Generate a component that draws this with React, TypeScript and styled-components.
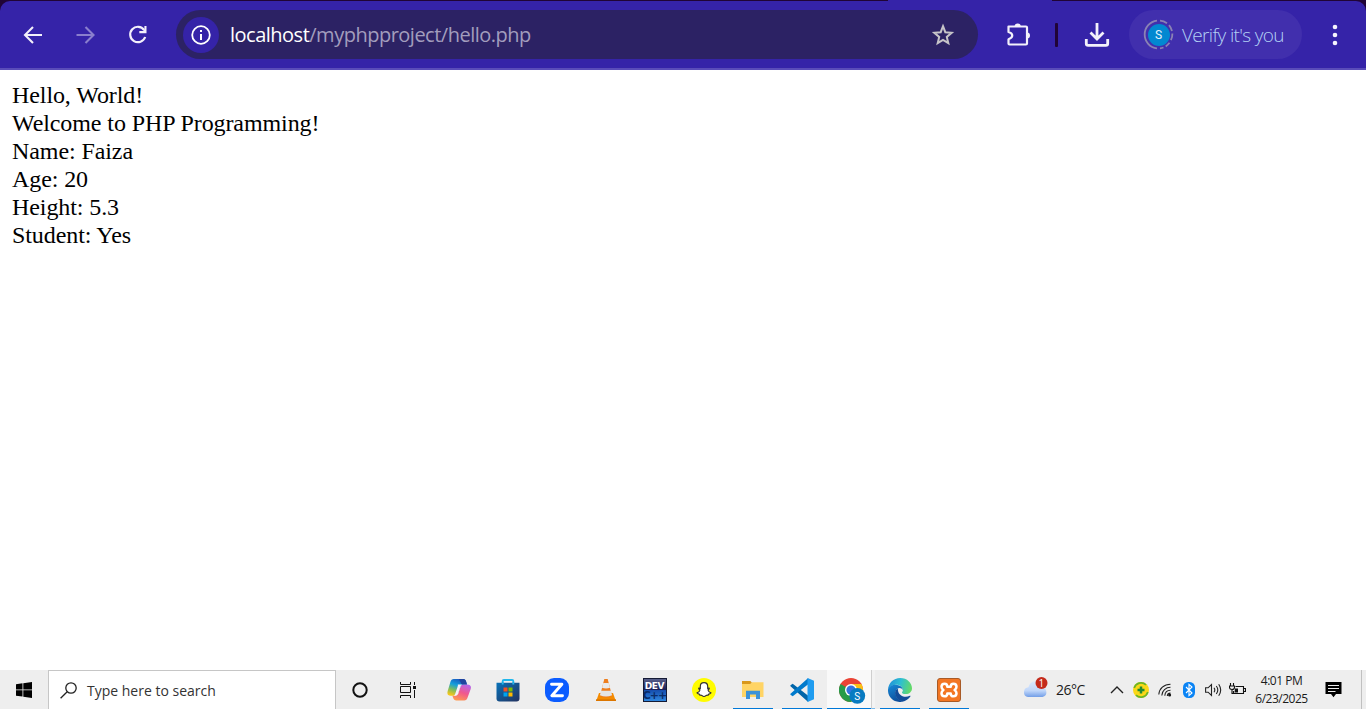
import React from "react";
import styled, { createGlobalStyle } from "styled-components";

const GlobalStyle = createGlobalStyle`
  *, *::before, *::after { box-sizing: border-box; }
  html, body { margin: 0; padding: 0; overflow: hidden; background: #fff; }
  svg { display: block; flex: none; }
`;

const uiFont = `"Open Sans", "Noto Sans", sans-serif`;

const Screen = styled.div`
  display: flex;
  flex-direction: column;
  width: 1366px;
  height: 709px;
  overflow: hidden;
  font-family: ${uiFont};
`;

/* ---------- browser ---------- */

const Frame = styled.header`
  flex: none;
  height: 70px;
  background: #200436;
`;

const TabEdge = styled.div`
  width: 164px;
  height: 1px;
  margin-left: 888px;
  background: #3523a8;
`;

const Toolbar = styled.div`
  display: flex;
  align-items: center;
  height: 69px;
  padding: 0 7px;
  background: #3523a8;
  border-bottom: 2px solid #5a4cb9;
  border-radius: 10px 10px 0 0;
`;

const ToolButton = styled.button<{ $width: number }>`
  display: flex;
  align-items: center;
  justify-content: center;
  flex: none;
  width: ${(p) => p.$width}px;
  height: 48px;
  padding: 0;
  border: 0;
  background: none;
`;

const Omnibox = styled.div`
  display: flex;
  align-items: center;
  flex: none;
  width: 802px;
  height: 49px;
  margin: 0 14px 0 12px;
  padding: 0 23px 0 7px;
  background: #2c2264;
  border-radius: 25px;
`;

const SiteInfo = styled.span`
  display: flex;
  align-items: center;
  justify-content: center;
  width: 36px;
  height: 36px;
  margin-right: 11px;
  border-radius: 50%;
  background: #3523a8;
`;

const Address = styled.span`
  flex: 1;
  color: #a29dbd;
  font-size: 20px;
  line-height: 28px;
  letter-spacing: -0.5px;
  white-space: nowrap;
`;

const Host = styled.span`
  color: #fff;
`;

const Divider = styled.span`
  flex: none;
  width: 3px;
  height: 24px;
  margin: 0 14px 0 12px;
  border-radius: 1px;
  background: #200436;
`;

const ProfileChip = styled.button`
  display: flex;
  align-items: center;
  flex: none;
  width: 173px;
  height: 49px;
  margin: 0 7px 0 8px;
  padding: 0 0 0 14px;
  border: 0;
  border-radius: 25px;
  background: #412fad;
  color: #b3d1f5;
  font-family: ${uiFont};
  font-weight: 300;
  font-size: 19px;
  letter-spacing: -0.65px;
  white-space: nowrap;
`;

const Avatar = styled.span`
  display: grid;
  place-items: center;
  width: 31px;
  height: 31px;
  margin-right: 8px;
  & > * { grid-area: 1 / 1; }
`;

const AvatarFace = styled.span`
  width: 22px;
  height: 22px;
  border-radius: 50%;
  background: #0288d1;
  color: #e4f3fc;
  font: 400 12px/22px Roboto, sans-serif;
  letter-spacing: 0;
  text-align: center;
`;

const Page = styled.main`
  flex: 1;
  padding: 11px 12px;
  background: #fff;
  color: #000;
  font-family: "Liberation Serif", serif;
  font-size: 24px;
  line-height: 28px;
  letter-spacing: -0.09px;
`;

const Line = styled.div`
  white-space: nowrap;
`;

/* ---------- taskbar ---------- */

const Taskbar = styled.footer`
  display: flex;
  flex: none;
  height: 39px;
  background: #eee;
  color: #1b1b1b;
`;

const Slot = styled.div<{ $width: number; $end?: number }>`
  display: flex;
  justify-content: center;
  align-items: center;
  flex: none;
  width: ${(p) => p.$width}px;
  height: 39px;
  padding-right: ${(p) => p.$end ?? 0}px;
`;

const Search = styled.div`
  display: flex;
  align-items: center;
  flex: none;
  width: 288px;
  height: 39px;
  padding: 0 0 0 11px;
  gap: 10px;
  border: 1px solid #c6c6c6;
  border-bottom: 0;
  background: #fff;
  color: #333;
  font-size: 14px;
  letter-spacing: 0;
`;

const Apps = styled.div`
  display: flex;
  flex: none;
  margin-left: 7px;
  gap: 9px;
`;

const AppButton = styled.div<{ $open?: boolean }>`
  display: flex;
  justify-content: center;
  flex: none;
  width: 40px;
  height: 39px;
  padding-top: 8px;
  padding-right: 1px;
  border-bottom: ${(p) => (p.$open ? "1px solid #0078d7" : "0")};
`;

const ActiveApp = styled.div`
  display: flex;
  flex: none;
  height: 39px;
  margin: 0 -4px;
`;

const ActiveFace = styled.div`
  width: 44px;
  height: 39px;
  padding: 8px 0 0 12px;
  background: #f9f9f9;
  border-bottom: 1px solid #0078d7;
`;

const StackEdge = styled.div`
  width: 4px;
  height: 39px;
  background: #f3f3f3;
  border-left: 1px solid #cfcfcf;
  border-bottom: 1px solid #76b9ed;
`;

const Tray = styled.div`
  display: flex;
  align-items: center;
  margin-left: auto;
`;

const WeatherBox = styled.div`
  padding-bottom: 4px;
`;

const Temperature = styled.span`
  width: 49px;
  margin-left: 7px;
  font-size: 14px;
  letter-spacing: -0.5px;
  white-space: nowrap;
`;

const Clock = styled.div`
  width: 65px;
  color: #1b1b1b;
  font-size: 12px;
  line-height: 18px;
  letter-spacing: -0.5px;
  text-align: center;
  white-space: nowrap;
`;

const ShowDesktop = styled.div`
  width: 5px;
  height: 39px;
  border-left: 1px solid #c0c0c0;
`;

/* ---------- toolbar icons ---------- */

const Back = ({ dim }: { dim?: boolean }) => (
  <svg width="20" height="20" viewBox="0 0 20 20" fill="none" stroke={dim ? "#8a7fcd" : "#f3f0fb"} strokeWidth="2.1">
    {dim ? <path d="M.5 10H17.5M9.5 2l8 8-8 8" /> : <path d="M19 10H2M10 2l-8 8 8 8" />}
  </svg>
);

const Reload = () => (
  <svg width="20" height="20" viewBox="0 0 20 20">
    <path d="M16.2 5A7.7 7.7 0 1 0 17.2 12" fill="none" stroke="#f3f0fb" strokeWidth="2.2" />
    <path d="M18.5 1v7.2h-7.2V6.1h3.9L16.4 4.6V1z" fill="#f3f0fb" />
  </svg>
);

const Info = () => (
  <svg width="20" height="20" viewBox="0 0 20 20">
    <circle cx="10" cy="10" r="8.8" fill="none" stroke="#fff" strokeWidth="1.8" />
    <path d="M9 5h2v2H9zM9 9h2v6H9z" fill="#fff" />
  </svg>
);

const Star = () => (
  <svg width="24" height="24" viewBox="0 0 24 24">
    <path
      d="M12 3.2l2.3 6 6.4.5-4.9 4.2 1.5 6.3-5.3-3.3-5.3 3.3 1.5-6.3-4.9-4.2 6.4-.5z"
      fill="none" stroke="#c6c4c8" strokeWidth="2"
    />
  </svg>
);

const Puzzle = () => (
  <svg width="26" height="26" viewBox="0 0 26 26">
    <path
      d="M3.5 4.5h17.5q1 0 1 1v16q0 1-1 1h-16.500q-1 0-1-1v-4.300c5-1.700 5-5.700 0-7.200z"
      fill="none" stroke="#f3f0fb" strokeWidth="2.2" strokeLinejoin="round"
    />
    <path d="M9.600 4.500a3.100 3.100 0 0 1 6.200 0zM22 10.500a3 3 0 0 1 0 6z" fill="#f3f0fb" />
  </svg>
);

const Download = () => (
  <svg width="26" height="26" viewBox="0 0 26 26" fill="none" stroke="#f3f0fb" strokeWidth="2.8">
    <path d="M13 1v15.500M6.500 10.500L13 17l6.500-6.500M2.300 17v4.500q0 1.800 1.800 1.800h17.800q1.800 0 1.800-1.800V17" />
  </svg>
);

const Dots = () => (
  <svg width="6" height="22" viewBox="0 0 6 22" fill="#f6f4fc">
    <circle cx="3" cy="3" r="2.3" />
    <circle cx="3" cy="11" r="2.3" />
    <circle cx="3" cy="19" r="2.3" />
  </svg>
);

const AvatarRing = () => (
  <svg width="31" height="31" viewBox="0 0 31 31" fill="none" stroke="#8a82b4" strokeWidth="1.8">
    <path d="M14 1.6A14 14 0 0 0 14 29.4" />
    <path d="M17 1.6a14 14 0 0 1 7 2.6M26 6.2a14 14 0 0 1 3 5.8M29.4 14.5a14 14 0 0 1-1.500 6.700M26.500 23.800a14 14 0 0 1-3.800 3.600M20.500 28.500a14 14 0 0 1-3.500.9" />
  </svg>
);

/* ---------- taskbar icons ---------- */

const Windows = () => (
  <svg width="16" height="16" viewBox="0 0 16 16">
    <path d="M0 2.2L6.500 1.300V7.500H0zM7.300 1.200L16 0V7.500H7.300zM0 8.300H6.500V14.600L0 13.700zM7.300 8.300H16V16L7.300 14.800z" />
  </svg>
);

const Magnifier = () => (
  <svg width="17" height="17" viewBox="0 0 17 17" fill="none" stroke="#222" strokeWidth="1.3">
    <circle cx="11" cy="6" r="5.2" />
    <path d="M7.2 9.800L.6 16.300" />
  </svg>
);

const Cortana = () => (
  <svg width="16" height="16" viewBox="0 0 16 16">
    <circle cx="8" cy="8" r="6.700" fill="none" stroke="#111" strokeWidth="2" />
  </svg>
);

const TaskView = () => (
  <svg width="17" height="16" viewBox="0 0 17 16" fill="none" stroke="#111">
    <path d="M.5 0v2.500h10V0M.5 16v-2.500h10V16M.5 4.500h10v6H.5zM14.500 0v3M14.500 8v8" />
    <path d="M13 4h3v3h-3z" fill="#111" stroke="none" />
  </svg>
);

const Copilot = () => (
  <svg width="24" height="24" viewBox="0 0 24 24">
    <defs>
      <linearGradient id="copA" x1=".7" y1="0" x2=".3" y2="1">
        <stop offset="0" stopColor="#174fbd" />
        <stop offset=".4" stopColor="#149fdb" />
        <stop offset=".7" stopColor="#7fbd5c" />
        <stop offset="1" stopColor="#f5c719" />
      </linearGradient>
      <linearGradient id="copB" x1=".7" y1="0" x2=".3" y2="1">
        <stop offset="0" stopColor="#b765e8" />
        <stop offset=".5" stopColor="#f1588d" />
        <stop offset="1" stopColor="#ff9950" />
      </linearGradient>
    </defs>
    <path d="M6.800 1h9.300c1.800 0 2.500 1.100 3 2.600l.9 2.900h-3.300c-2 0-2.900.8-3.500 2.700l-1.900 6c-.6 1.800-1.600 2.500-3.300 2.500H4c-3.300 0-4.100-1.800-3.300-4.600L3.400 4C4 2.100 5 1 6.800 1z" fill="url(#copA)" />
    <path d="M17.200 22.500H9.400c-1.800 0-2.600-.7-3.200-2.400l-.8-2.400H8c2 0 2.900-.8 3.500-2.700l1.900-6c.6-1.800 1.600-2.500 3.300-2.500H20c3.300 0 4.500 1.600 3.700 4.400l-3.100 8.600c-.6 1.900-1.600 3-3.400 3z" fill="url(#copB)" />
    <path d="M10.700 6.500h4.700c-1.300.5-1.800 1.500-2.200 2.700l-2 6.100c-.4 1.400-1 2-2.300 2.400H6.500c1.200-.5 1.500-1.300 1.900-2.500l2.100-6.300c.4-1.200.6-1.800.2-2.400z" fill="#f6eefa" />
    <path d="M12 1h4.100c1.800 0 2.500 1.100 3 2.600l.9 2.900h-4.300c-1.300 0-1.600-.7-2-2z" fill="#20449e" />
  </svg>
);

const Store = () => (
  <svg width="24" height="24" viewBox="0 0 24 24">
    <defs>
      <linearGradient id="bag" x1="0" y1="0" x2="1" y2="1">
        <stop offset="0" stopColor="#0872b9" />
        <stop offset="1" stopColor="#24325f" />
      </linearGradient>
    </defs>
    <path d="M6.700 8V3.200q0-1.200 1.200-1.200h8.200q1.200 0 1.200 1.200V8" fill="none" stroke="#20b7ec" strokeWidth="1.9" />
    <path d="M.5 4.800h23v15.700q0 3-3 3h-17q-3 0-3-3z" fill="url(#bag)" />
    <path d="M6.700 4.800v1.700M17.300 4.800v1.700" stroke="#20b7ec" strokeWidth="1.9" />
    <path d="M7.500 9.500h4v4h-4z" fill="#f25022" />
    <path d="M12.500 9.500h4v4h-4z" fill="#7fba00" />
    <path d="M7.500 14.500h4v4h-4z" fill="#00a4ef" />
    <path d="M12.500 14.500h4v4h-4z" fill="#ffb900" />
  </svg>
);

const Zoom = () => (
  <svg width="24" height="24" viewBox="0 0 24 24">
    <rect width="24" height="24" rx="9" fill="#0b5cff" />
    <path d="M6.500 6.300h10.400L6.800 17.700h10.700" fill="none" stroke="#fff" strokeWidth="2.900" strokeLinecap="round" strokeLinejoin="round" />
  </svg>
);

const Vlc = () => (
  <svg width="22" height="24" viewBox="0 0 22 24">
    <path d="M4 15h14l2.800 8H1.200z" fill="#f48b00" />
    <path d="M1 21.300h20V23H1z" fill="#dc7600" />
    <path d="M9.300 1h3.400l4.400 17.200q-6.100 2.600-12.200 0z" fill="#ee7d1c" />
    <path d="M8.300 5h5.400l1.300 4.700q-4 1.500-8 0z" fill="#e9e9e9" />
    <path d="M6.100 12.700h9.800l1.200 4.500q-6.100 2.400-12.200 0z" fill="#e4e4e4" />
  </svg>
);

const DevBox = styled.div`
  display: flex;
  flex-direction: column;
  align-items: center;
  width: 24px;
  height: 24px;
  padding-top: 3px;
  overflow: hidden;
  border: 1px solid #151b35;
  background: linear-gradient(#59608a, #1b2058 48%, #174fae 52%, #2f87df);
  color: #fff;
  font: 700 9px/9px "DejaVu Sans", sans-serif;
  letter-spacing: -0.4px;
`;

const DevSub = styled.span`
  color: #0a2c68;
  font-size: 11px;
  line-height: 9px;
  letter-spacing: -1px;
`;

const Snapchat = () => (
  <svg width="24" height="24" viewBox="0 0 24 24">
    <circle cx="12" cy="12" r="12" fill="#fffc00" />
    <path
      d="M12 4.700c-2.600 0-3.700 1.700-3.700 3.700v2l-1.500-.2c-.5.6.5 1.300 1.200 1.600-.4 1.500-1.500 2.600-3 3 .1 1 1.500.9 2.200 1.200l.5 1.100c.9-.1 1.800-.1 2.400.5.6.6 1 .9 1.900.9s1.300-.3 1.900-.9c.6-.6 1.500-.6 2.400-.5l.5-1.100c.7-.3 2.100-.2 2.200-1.200-1.500-.4-2.600-1.500-3-3 .7-.3 1.700-1 1.200-1.600l-1.500.2v-2c0-2-1.100-3.700-3.700-3.700z"
      fill="#fff" stroke="#333" strokeWidth="1.2" strokeLinejoin="round"
    />
  </svg>
);

const Explorer = () => (
  <svg width="22" height="24" viewBox="0 0 22 24">
    <path d="M0 6h8.500L10 4.300h11.500V19H0z" fill="#ffd465" />
    <path d="M0 6V3h8.300l1.500 1.500L8.300 6z" fill="#d9981c" />
    <path d="M4 21v-8.300h14V21h-4v-4.400H8V21z" fill="#3b92d8" />
  </svg>
);

const VsCode = () => (
  <svg width="24" height="24" viewBox="0 0 24 24">
    <path d="M1.200 6.800l1.500-1.100L18.200 17.800V24L.5 8.300q-.6-.8.7-1.500z" fill="#0065a9" />
    <path d="M1.200 17.200l1.500 1.100L18.200 6.200V0L.5 15.700q-.6.8.7 1.500z" fill="#007acc" />
    <path d="M17.500 0L24 2.800v18.400L17.500 24z" fill="#1f9cf0" />
  </svg>
);

const Chrome = () => (
  <svg width="27" height="26" viewBox="0 0 27 26">
    <circle cx="12" cy="12" r="12" fill="#ea4335" />
    <path d="M12 12L1.600 6A12 12 0 0 0 12 24z" fill="#279b48" />
    <path d="M12 12L6 15.500 12 24q1.800 0 3.500-.5L17.300 15z" fill="#279b48" />
    <path d="M12 6h10.400A12 12 0 0 1 12 24l5.200-9z" fill="#fbc116" />
    <circle cx="12" cy="12" r="6" fill="#fff" />
    <circle cx="12" cy="12" r="4.600" fill="#3474e0" />
    <circle cx="18.300" cy="17.800" r="7.900" fill="#087bc1" />
    <text x="18.300" y="21.500" fill="#fff" fontFamily="Roboto" fontSize="10" textAnchor="middle">S</text>
  </svg>
);

const Edge = () => (
  <svg width="24" height="24" viewBox="0 0 24 24">
    <defs>
      <linearGradient id="edgeTop" x1="0" y1=".3" x2="1" y2=".5">
        <stop offset="0" stopColor="#208fd8" />
        <stop offset=".5" stopColor="#2ebfd1" />
        <stop offset="1" stopColor="#65da65" />
      </linearGradient>
      <linearGradient id="edgeLeft" x1="0" y1="0" x2=".4" y2="1">
        <stop offset="0" stopColor="#188ad7" />
        <stop offset="1" stopColor="#0d4f9d" />
      </linearGradient>
    </defs>
    <path d="M0 11.500C.5 5 5.500 0 12.200 0 19.200 0 24 5 24 10.300c0 3.500-2.700 5.800-6.200 5.800-3 0-4.200-1-3.800-1.800.5-.8 1-1.200.8-2.600C14.500 8.500 11 6.500 7.500 6.800 3.500 7 1 9.500 0 11.500z" fill="url(#edgeTop)" />
    <path d="M0 11.500C1 8.700 4.300 6.600 7.800 6.800c3.800.2 7 2.200 7 5.200-.7-1.300-2-2.200-3.500-2-3 .6-4.500 3.500-3.500 7 .8 3 3.800 5.500 6.500 6.700C6 25.500-.5 19 0 11.500z" fill="url(#edgeLeft)" />
    <path d="M9.900 10.500c-3 1.500-3.400 5-1.900 8 1.500 2.800 3.800 4.700 6.400 5.200 3.300-.5 6.300-2.500 8.100-5.400.3-.6-.1-.8-.7-.5-5.500 2.700-12.400-.4-11.900-7.300z" fill="#124c99" />
  </svg>
);

const Xampp = () => (
  <svg width="24" height="24" viewBox="0 0 24 24">
    <rect x=".5" y=".5" width="23" height="23" rx="2.500" fill="#f37623" stroke="#a85a26" />
    <path
      d="M7.600 5.700C5.700 5.700 4.500 7 4.500 8.700c0 1.500.8 2.500 1.900 3.300-1.100.8-1.900 1.800-1.900 3.300 0 1.700 1.200 3 3.100 3 2 0 2.700-1.300 2.700-2.900h3.400c0 1.600.7 2.900 2.700 2.900 1.900 0 3.100-1.300 3.100-3 0-1.500-.8-2.500-1.900-3.300 1.100-.8 1.900-1.800 1.900-3.300 0-1.700-1.200-3-3.100-3-2 0-2.700 1.300-2.700 3h-3.400c0-1.700-.7-3-2.700-3z"
      fill="none" stroke="#fff" strokeWidth="2.500" strokeLinejoin="round"
    />
  </svg>
);

const Weather = () => (
  <svg width="26" height="21" viewBox="0 0 26 21">
    <defs>
      <linearGradient id="cloud" x1="0" y1="0" x2="0" y2="1">
        <stop offset="0" stopColor="#dce9fc" />
        <stop offset=".6" stopColor="#bfd6fa" />
        <stop offset="1" stopColor="#729ee7" />
      </linearGradient>
    </defs>
    <path d="M5 20a4.900 4.900 0 0 1 .5-9.700C6.300 6.500 9 4.300 12 4.300c4 0 6.500 2.500 7 6.200a4.800 4.800 0 0 1 .5 9.500z" fill="url(#cloud)" />
    <circle cx="18.500" cy="6" r="6" fill="#c42b1c" />
    <text x="18.300" y="9.600" fill="#fff" fontFamily="Open Sans" fontSize="10" textAnchor="middle">1</text>
  </svg>
);

const Chevron = () => (
  <svg width="14" height="8" viewBox="0 0 14 8">
    <path d="M1 7l6-6 6 6" fill="none" stroke="#222" strokeWidth="1.400" />
  </svg>
);

const Shield = () => (
  <svg width="16" height="16" viewBox="0 0 16 16">
    <circle cx="8" cy="8" r="8" fill="#fbd817" />
    <path d="M1.200 6A7.200 7.200 0 0 1 13 2.800M14.800 10A7.200 7.200 0 0 1 3 13.200" fill="none" stroke="#69b52a" strokeWidth="1.600" />
    <path d="M8 4.500v7M4.500 8h7" stroke="#218b31" strokeWidth="2.500" />
  </svg>
);

const Wifi = () => (
  <svg width="14" height="14" viewBox="0 0 14 14" fill="none" stroke="#222" strokeWidth="1.100">
    <path d="M.8 11.500C1.200 5.500 6 1.200 12.500 1.200M3.800 12.500c.2-4.700 4-8.200 8.700-8.200M6.800 12.800c.2-3.300 2.500-5.500 5.700-5.500M9.300 13c.1-1.800 1.400-2.900 3.200-2.900" />
    <circle cx="11.600" cy="12" r="1.500" fill="#111" stroke="none" />
  </svg>
);

const Bluetooth = () => (
  <svg width="12" height="16" viewBox="0 0 12 16">
    <rect width="12" height="16" rx="5.200" fill="#0a84f5" />
    <path d="M3 5l6 6-3 2.600V2.400L9 5l-6 6" fill="none" stroke="#fff" strokeWidth="1.100" />
  </svg>
);

const Speaker = () => (
  <svg width="17" height="14" viewBox="0 0 17 14" fill="none" stroke="#222" strokeWidth="1.100">
    <path d="M.6 4.800h2.500L6.500 1.500v11L3.100 9.200H.6zM9 4.800q1.600 2.200 0 4.400M11.300 3q3 4 0 8M13.700 1.200q4 5.800 0 11.600" />
  </svg>
);

const Battery = () => (
  <svg width="17" height="13" viewBox="0 0 17 13" fill="none" stroke="#111" strokeWidth="1.100">
    <path d="M6.500 3.500h8v7h-10V8M15 5.500h1.500v3H15M1.500 0v3M4.500 0v3M.5 3h5v1.500q0 2-2.500 2t-2.500-2zM3 6.500v4h2" />
    <path d="M6 5.500h3v4H5.500z" fill="#111" stroke="none" />
  </svg>
);

const Notice = () => (
  <svg width="17" height="17" viewBox="0 0 17 17">
    <path d="M.5 1h16v12h-5.500L8.500 16.300 6 13H.5z" fill="#000" />
    <path d="M3 4.500h11M3 7.500h11M3 10.500h7.500" stroke="#eee" strokeWidth="1" />
  </svg>
);

const lines = [
  "Hello, World!",
  "Welcome to PHP Programming!",
  "Name: Faiza",
  "Age: 20",
  "Height: 5.3",
  "Student: Yes",
];

export default function App() {
  return (
    <Screen>
      <GlobalStyle />
      <Frame>
        <TabEdge />
        <Toolbar>
          <ToolButton $width={52}><Back /></ToolButton>
          <ToolButton $width={53}><Back dim /></ToolButton>
          <ToolButton $width={52}><Reload /></ToolButton>
          <Omnibox>
            <SiteInfo><Info /></SiteInfo>
            <Address><Host>localhost</Host>/myphpproject/hello.php</Address>
            <Star />
          </Omnibox>
          <ToolButton $width={51}><Puzzle /></ToolButton>
          <Divider />
          <ToolButton $width={49}><Download /></ToolButton>
          <ProfileChip>
            <Avatar><AvatarRing /><AvatarFace>S</AvatarFace></Avatar>
            Verify it's you
          </ProfileChip>
          <ToolButton $width={52}><Dots /></ToolButton>
        </Toolbar>
      </Frame>
      <Page>
        {lines.map((l) => <Line key={l}>{l}</Line>)}
      </Page>
      <Taskbar>
        <Slot $width={48}><Windows /></Slot>
        <Search><Magnifier />Type here to search</Search>
        <Slot $width={48}><Cortana /></Slot>
        <Slot $width={48}><TaskView /></Slot>
        <Apps>
          <AppButton><Copilot /></AppButton>
          <AppButton><Store /></AppButton>
          <AppButton><Zoom /></AppButton>
          <AppButton><Vlc /></AppButton>
          <AppButton><DevBox>DEV<DevSub>C++</DevSub></DevBox></AppButton>
          <AppButton><Snapchat /></AppButton>
          <AppButton $open><Explorer /></AppButton>
          <AppButton $open><VsCode /></AppButton>
          <ActiveApp>
            <ActiveFace><Chrome /></ActiveFace>
            <StackEdge />
          </ActiveApp>
          <AppButton $open><Edge /></AppButton>
          <AppButton $open><Xampp /></AppButton>
        </Apps>
        <Tray>
          <WeatherBox><Weather /></WeatherBox>
          <Temperature>26°C</Temperature>
          <Slot $width={24}><Chevron /></Slot>
          <Slot $width={24}><Shield /></Slot>
          <Slot $width={24}><Wifi /></Slot>
          <Slot $width={24}><Bluetooth /></Slot>
          <Slot $width={24}><Speaker /></Slot>
          <Slot $width={24}><Battery /></Slot>
          <Clock>4:01 PM<br />6/23/2025</Clock>
          <Slot $width={47} $end={9}><Notice /></Slot>
          <ShowDesktop />
        </Tray>
      </Taskbar>
    </Screen>
  );
}
